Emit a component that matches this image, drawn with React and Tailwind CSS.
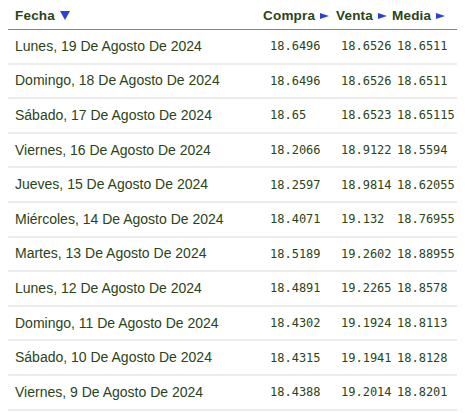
import React from "react";

const rows = [
  ["Lunes, 19 De Agosto De 2024", "18.6496", "18.6526", "18.6511"],
  ["Domingo, 18 De Agosto De 2024", "18.6496", "18.6526", "18.6511"],
  ["Sábado, 17 De Agosto De 2024", "18.65", "18.6523", "18.65115"],
  ["Viernes, 16 De Agosto De 2024", "18.2066", "18.9122", "18.5594"],
  ["Jueves, 15 De Agosto De 2024", "18.2597", "18.9814", "18.62055"],
  ["Miércoles, 14 De Agosto De 2024", "18.4071", "19.132", "18.76955"],
  ["Martes, 13 De Agosto De 2024", "18.5189", "19.2602", "18.88955"],
  ["Lunes, 12 De Agosto De 2024", "18.4891", "19.2265", "18.8578"],
  ["Domingo, 11 De Agosto De 2024", "18.4302", "19.1924", "18.8113"],
  ["Sábado, 10 De Agosto De 2024", "18.4315", "19.1941", "18.8128"],
  ["Viernes, 9 De Agosto De 2024", "18.4388", "19.2014", "18.8201"],
];

const cols = "grid grid-cols-[255px_72px_56px_60px]";

function Right() {
  return (
    <svg width="9" height="6" viewBox="0 0 9 6" className="inline-block ml-[5px] mb-[1px]">
      <polygon points="0,0 9,3 0,6" fill="#2c3fd8" />
    </svg>
  );
}

function Down() {
  return (
    <svg width="10" height="9" viewBox="0 0 10 9" className="inline-block ml-[5px] mb-[1px]">
      <polygon points="0,0 10,0 5,9" fill="#2c3fd8" />
    </svg>
  );
}

export default function App() {
  return (
    <div className="w-[465px] h-[413px] bg-white px-[8px] font-['Liberation_Sans',Arial,sans-serif] text-[#2a4417]">
      <div className={`${cols} h-[30px] items-center pt-[3px] border-b border-[#858585] text-[13.5px] font-bold tracking-[0.2px]`}>
        <div className="pl-[7px] flex items-center">
          Fecha<Down />
        </div>
        <div className="pl-[0px] whitespace-nowrap flex items-center">
          Compra<Right />
        </div>
        <div className="pl-[1px] whitespace-nowrap flex items-center">
          Venta<Right />
        </div>
        <div className="pl-[1px] whitespace-nowrap flex items-center">
          Media<Right />
        </div>
      </div>
      {rows.map((r, i) => (
        <div
          key={i}
          className={`${cols} h-[34.6px] items-center border-b-2 border-[#ececec]`}
        >
          <div className="pl-[7px] text-[14px] whitespace-nowrap">{r[0]}</div>
          <div className="pl-[7px] text-[12px] font-['DejaVu_Sans_Mono',monospace]">{r[1]}</div>
          <div className="pl-[6px] text-[12px] font-['DejaVu_Sans_Mono',monospace]">{r[2]}</div>
          <div className="pl-[6px] text-[12px] font-['DejaVu_Sans_Mono',monospace]">{r[3]}</div>
        </div>
      ))}
    </div>
  );
}
